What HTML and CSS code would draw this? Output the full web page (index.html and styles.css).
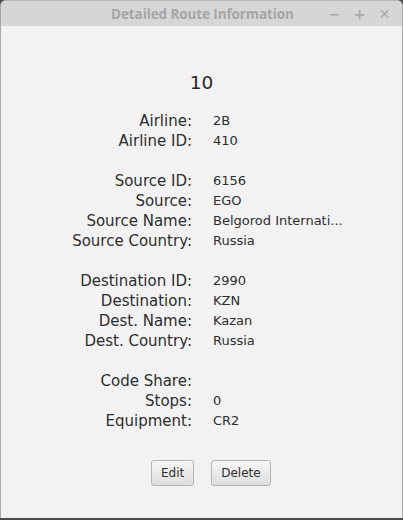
FILE: index.html
```html
<!DOCTYPE html>
<html>
<head>
<meta charset="utf-8">
<link rel="stylesheet" href="styles.css">
</head>
<body>
<div class="window">
  <div class="titlebar">
    <span class="title">Detailed Route Information</span>
    <div class="controls">
      <span class="ctl">&#8722;</span>
      <span class="ctl">+</span>
      <span class="ctl">&#10005;</span>
    </div>
  </div>
  <div class="content">
    <div class="heading">10</div>
    <div class="group">
      <div class="label">Airline:</div><div class="value">2B</div>
      <div class="label">Airline ID:</div><div class="value">410</div>
    </div>
    <div class="group">
      <div class="label">Source ID:</div><div class="value">6156</div>
      <div class="label">Source:</div><div class="value">EGO</div>
      <div class="label">Source Name:</div><div class="value">Belgorod Internati...</div>
      <div class="label">Source Country:</div><div class="value">Russia</div>
    </div>
    <div class="group">
      <div class="label">Destination ID:</div><div class="value">2990</div>
      <div class="label">Destination:</div><div class="value">KZN</div>
      <div class="label">Dest. Name:</div><div class="value">Kazan</div>
      <div class="label">Dest. Country:</div><div class="value">Russia</div>
    </div>
    <div class="group">
      <div class="label">Code Share:</div><div class="value"></div>
      <div class="label">Stops:</div><div class="value">0</div>
      <div class="label">Equipment:</div><div class="value">CR2</div>
    </div>
    <div class="buttons">
      <button class="btn">Edit</button>
      <button class="btn">Delete</button>
    </div>
  </div>
</div>
</body>
</html>
```
FILE: styles.css
```css
html, body {
  margin: 0;
  padding: 0;
}
body {
  width: 403px;
  height: 520px;
  background: #4a4a4a;
  overflow: hidden;
  font-family: "DejaVu Sans", sans-serif;
  color: #2e2e2e;
}
.window {
  box-sizing: border-box;
  width: 403px;
  height: 518px;
  background: #f2f2f2;
  border-left: 1px solid #a9a9a9;
  border-right: 1px solid #a9a9a9;
  border-top: 1px solid #b8b8b8;
  border-radius: 6px 6px 0 0;
  display: flex;
  flex-direction: column;
  overflow: hidden;
}
.titlebar {
  height: 25px;
  flex: none;
  background: #d6d6d6;
  display: flex;
  align-items: center;
  justify-content: center;
  position: relative;
}
.title {
  font-family: "Open Sans", sans-serif;
  font-weight: 700;
  font-size: 13.5px;
  color: #a5a5a5;
  margin-left: 2px;
  letter-spacing: -0.1px;
}
.controls {
  position: absolute;
  right: 10px;
  top: 0;
  height: 25px;
  display: flex;
  align-items: center;
  gap: 10px;
}
.ctl {
  width: 15px;
  text-align: center;
  color: #a8a8a8;
  font-weight: 700;
  font-size: 14px;
}
.content {
  flex: 1;
  display: flex;
  flex-direction: column;
  padding-top: 44px;
}
.heading {
  text-align: center;
  font-size: 18.5px;
  line-height: 26px;
  color: #262626;
  margin-bottom: 15px;
}
.group {
  display: grid;
  grid-template-columns: 191px 1fr;
  column-gap: 21px;
  margin-bottom: 20px;
}
.label {
  text-align: right;
  font-size: 15px;
  line-height: 20px;
  height: 20px;
}
.value {
  font-size: 13px;
  line-height: 20px;
  height: 20px;
}
.buttons {
  display: flex;
  gap: 17px;
  padding-left: 150px;
  margin-top: 9px;
}
.btn {
  font-family: "DejaVu Sans", sans-serif;
  font-size: 12px;
  color: #2e2e2e;
  height: 26px;
  padding: 0 9px;
  border: 1px solid #b4b4b4;
  border-radius: 3px;
  background: linear-gradient(#f6f6f6, #dedede);
}
```
